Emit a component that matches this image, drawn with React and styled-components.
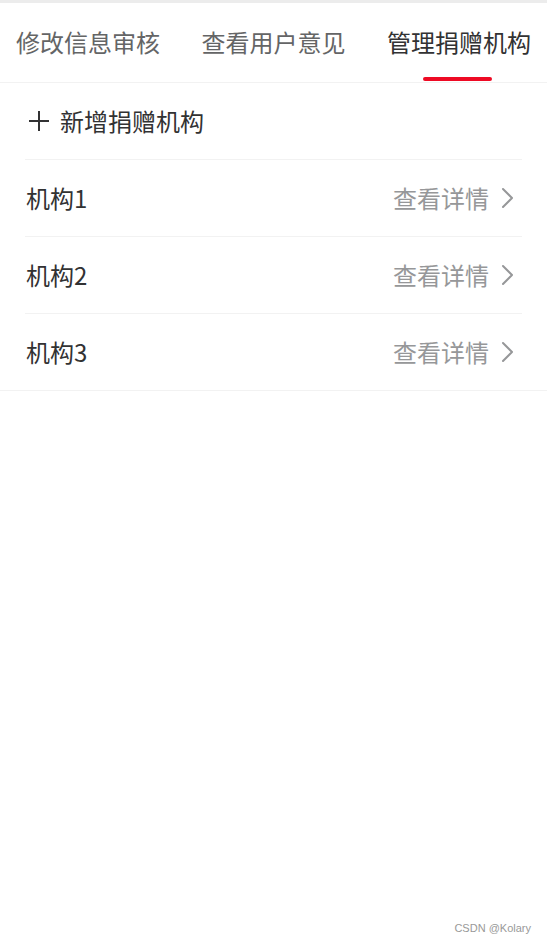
import React, { useState } from "react";
import styled, { createGlobalStyle } from "styled-components";

const GlobalStyle = createGlobalStyle`
	html, body {
		margin: 0;
		padding: 0;
		background: #ffffff;
	}
	body {
		font-family: "Noto Sans CJK SC", "Liberation Sans", sans-serif;
	}
`;

const TABS = ["修改信息审核", "查看用户意见", "管理捐赠机构"];
const ORGS = ["机构1", "机构2", "机构3"];

function PlusIcon() {
	return (
		<svg width="22" height="22" viewBox="0 0 22 22">
			<path d="M11 1v20M1 11h20" stroke="#323233" strokeWidth="2" fill="none" />
		</svg>
	);
}

function ArrowIcon() {
	return (
		<svg width="14" height="22" viewBox="0 0 14 22">
			<path
				d="M3 2l9 9-9 9"
				stroke="#969799"
				strokeWidth="2"
				fill="none"
				strokeLinecap="round"
				strokeLinejoin="round"
			/>
		</svg>
	);
}

export default function App() {
	const [active, setActive] = useState(2);

	return (
		<Page>
			<GlobalStyle />
			<TabNav>
				{TABS.map((t, i) => (
					<Tab key={t} active={i === active} onClick={() => setActive(i)}>
						{t}
						{i === active && <TabLine />}
					</Tab>
				))}
			</TabNav>

			<CellGroup>
				<Cell>
					<AddTitle>
						<PlusIcon />
						<span>新增捐赠机构</span>
					</AddTitle>
				</Cell>
				{ORGS.map((name) => (
					<Cell key={name}>
						<CellTitle>{name}</CellTitle>
						<CellValue>
							查看详情
							<ArrowIcon />
						</CellValue>
					</Cell>
				))}
			</CellGroup>

			<Watermark>CSDN @Kolary</Watermark>
		</Page>
	);
}

const Page = styled.div`
	min-height: 946px;
	box-sizing: border-box;
	border-top: 3px solid #ececec;
	background: #ffffff;
`;

const TabNav = styled.div`
	display: flex;
	height: 79px;
	border-bottom: 1px solid #f2f2f2;
	padding: 0 2px 0 0;
`;

const Tab = styled.div`
	position: relative;
	flex: 1;
	display: flex;
	align-items: center;
	justify-content: center;
	font-size: 24px;
	line-height: 32px;
	color: ${(p) => (p.active ? "#323233" : "#646566")};
	cursor: pointer;
	padding-bottom: 2px;

	&:first-child {
		justify-content: flex-start;
		padding-left: 16px;
	}
	&:last-child {
		justify-content: flex-end;
		padding-right: 14px;
	}
`;

const TabLine = styled.span`
	position: absolute;
	bottom: 1px;
	right: 53px;
	width: 69px;
	height: 4px;
	border-radius: 2px;
	background: #ee0a24;
`;

const CellGroup = styled.div`
	border-bottom: 1px solid #f2f2f2;
`;

const Cell = styled.div`
	position: relative;
	display: flex;
	align-items: center;
	justify-content: space-between;
	height: 76px;
	padding: 0 32px 0 26px;
	font-size: 24px;
	line-height: 32px;

	& + & {
		border-top: 1px solid #f2f2f2;
		margin: 0 25px;
		padding: 0 8px 0 1px;
	}
`;

const AddTitle = styled.div`
	display: flex;
	align-items: center;
	gap: 10px;
	color: #323233;
	padding-left: 2px;
	padding-bottom: 1px;

	svg {
		display: block;
	}
`;

const CellTitle = styled.span`
	color: #323233;
`;

const CellValue = styled.span`
	display: flex;
	align-items: center;
	gap: 11px;
	color: #969799;

	svg {
		display: block;
	}
`;

const Watermark = styled.div`
	position: absolute;
	right: 16px;
	top: 922px;
	font-family: "Liberation Sans", sans-serif;
	font-size: 11px;
	color: #999999;
`;
